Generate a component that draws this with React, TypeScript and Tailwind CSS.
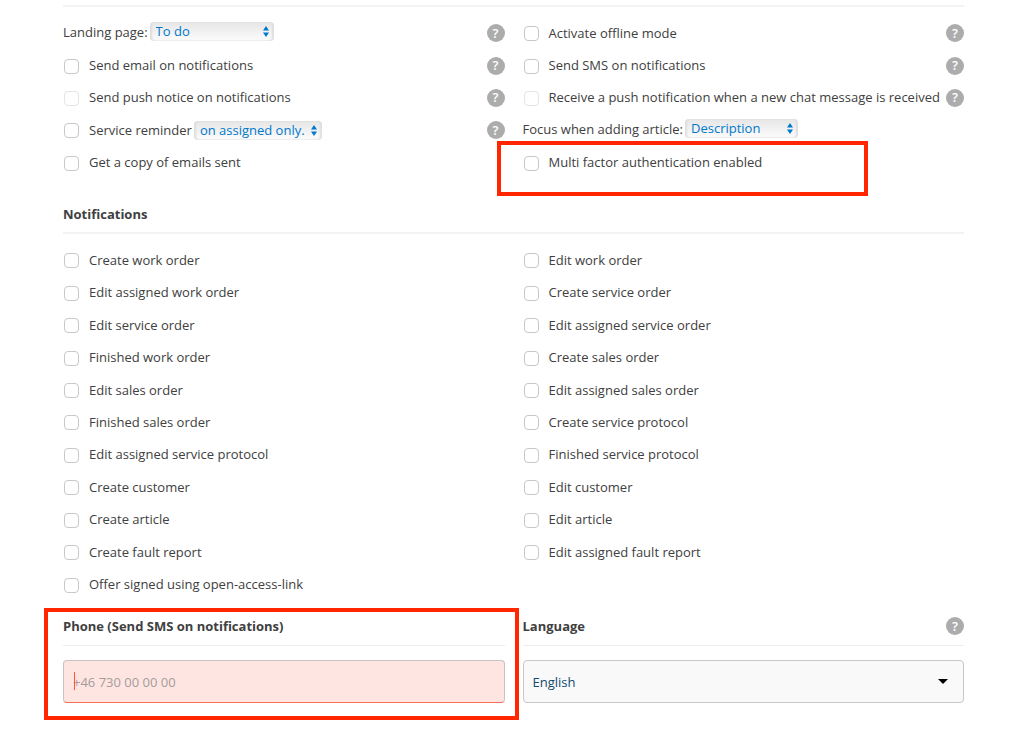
import { useState } from "react";
import type { ReactNode } from "react";

const leftNotifications = [
  "Create work order",
  "Edit assigned work order",
  "Edit service order",
  "Finished work order",
  "Edit sales order",
  "Finished sales order",
  "Edit assigned service protocol",
  "Create customer",
  "Create article",
  "Create fault report",
  "Offer signed using open-access-link",
];

const rightNotifications = [
  "Edit work order",
  "Create service order",
  "Edit assigned service order",
  "Create sales order",
  "Edit assigned sales order",
  "Create service protocol",
  "Finished service protocol",
  "Edit customer",
  "Edit article",
  "Edit assigned fault report",
];

const HelpButton = () => (
  <button
    type="button"
    aria-label="Help"
    className="flex size-[18px] shrink-0 items-center justify-center rounded-full bg-[#acacac] text-[13px] leading-none font-semibold text-white"
  >
    ?
  </button>
);

const CheckOption = ({ label, disabled = false }: { label: string; disabled?: boolean }) => (
  <label className="flex items-center gap-[10px] pl-px">
    <input
      type="checkbox"
      disabled={disabled}
      className="mt-px size-[15px] shrink-0 appearance-none rounded-[4px] border border-[#c8c8c8] bg-white checked:bg-[#0078cc] disabled:border-[#e4e4e4]"
    />
    <span className="pb-px">{label}</span>
  </label>
);

type InlineSelectProps = {
  label: string;
  options: string[];
  widthClass: string;
};

const InlineSelect = ({ label, options, widthClass }: InlineSelectProps) => (
  <span className={`relative h-[19px] ${widthClass}`}>
    <select
      aria-label={label}
      className="block h-full w-full appearance-none rounded-[4px] bg-linear-to-b from-[#e6e6e6] to-[#fcfcfc] pl-[6px] text-[13px] leading-[19px] font-medium text-[#0078cc] shadow-[inset_2px_0_2px_#dedede,inset_-2px_0_2px_#dedede]"
    >
      {options.map((option) => (
        <option key={option}>{option}</option>
      ))}
    </select>
    <svg viewBox="0 0 6 11" className="pointer-events-none absolute top-1 right-[5px] h-[11px] w-[6px] fill-[#0078cc]">
      <path d="M3 0 6 4.6H0zM3 11 0 6.4h6z" />
    </svg>
  </span>
);

const Row = ({ children, help = false }: { children: ReactNode; help?: boolean }) => (
  <div className="flex items-center justify-between">
    {children}
    {help && <HelpButton />}
  </div>
);

const Highlight = ({ className }: { className: string }) => (
  <div className={`pointer-events-none absolute border-4 border-[#ff2600] ${className}`} />
);

export default function App() {
  const [phone, setPhone] = useState("");

  return (
    <main className="min-h-screen bg-white pt-[5px] pr-[60px] pl-[63px] font-['Open_Sans',sans-serif] text-[13px] leading-5 text-[#404040]">
      <section className="grid grid-cols-2 gap-x-[18px] border-t-2 border-[#f3f3f3] pt-[10px]">
        <div className="grid min-h-[162px] auto-rows-fr">
          <Row help>
            <div className="flex items-center gap-[2px] pb-[3px]">
              <span>Landing page:</span>
              <InlineSelect label="Landing page" options={["To do", "Calendar"]} widthClass="w-[124px]" />
            </div>
          </Row>
          <Row help>
            <CheckOption label="Send email on notifications" />
          </Row>
          <Row help>
            <CheckOption label="Send push notice on notifications" disabled />
          </Row>
          <Row help>
            <div className="flex items-center gap-[2px]">
              <CheckOption label="Service reminder" />
              <InlineSelect label="Service reminder" options={["on assigned only.", "on all."]} widthClass="w-[128px]" />
            </div>
          </Row>
          <Row>
            <CheckOption label="Get a copy of emails sent" />
          </Row>
        </div>

        <div className="grid min-h-[162px] auto-rows-fr">
          <Row help>
            <CheckOption label="Activate offline mode" />
          </Row>
          <Row help>
            <CheckOption label="Send SMS on notifications" />
          </Row>
          <Row help>
            <CheckOption label="Receive a push notification when a new chat message is received" disabled />
          </Row>
          <Row>
            <div className="flex items-center gap-[2px] pb-[3px]">
              <span>Focus when adding article:</span>
              <InlineSelect label="Focus when adding article" options={["Description", "Quantity"]} widthClass="w-[113px]" />
            </div>
          </Row>
          <div className="relative flex items-center">
            <CheckOption label="Multi factor authentication enabled" />
            <Highlight className="-top-[6px] -bottom-[17px] -left-[26px] w-[371px]" />
          </div>
        </div>
      </section>

      <section className="pt-[25px]">
        <h2 className="border-b-2 border-[#f3f3f3] pb-2 font-bold">Notifications</h2>
        <div className="mt-[10px] grid min-h-[357px] grid-flow-col grid-cols-2 grid-rows-11 gap-x-[18px]">
          {[...leftNotifications, ...rightNotifications].map((label) => (
            <Row key={label}>
              <CheckOption label={label} />
            </Row>
          ))}
        </div>
      </section>

      <section className="grid grid-cols-2 gap-x-[18px] pt-[15px] pb-[26px]">
        <div className="relative">
          <label htmlFor="phone" className="block border-b border-[#ededed] pb-[9px] font-bold">
            Phone (Send SMS on notifications)
          </label>
          <div className="relative mt-[14px]">
            <input
              id="phone"
              type="tel"
              placeholder="+46 730 00 00 00"
              value={phone}
              onChange={(event) => setPhone(event.target.value)}
              className="block h-[43px] w-full rounded-[4px] border border-[#c8c4c3] border-b-[#f0705c] bg-[#ffe5e1] px-[9px] placeholder:text-[#a39c9b]"
            />
            {phone === "" && <span className="pointer-events-none absolute top-3 left-[11px] h-[18px] w-px bg-[#ff5533]" />}
          </div>
          <Highlight className="-top-2 -right-[14px] -bottom-[17px] -left-[19px]" />
        </div>

        <div>
          <div className="flex items-center justify-between border-b border-[#ededed] pb-[9px] font-bold">
            <label htmlFor="language">Language</label>
            <HelpButton />
          </div>
          <div className="relative mt-[14px]">
            <select
              id="language"
              className="block h-[43px] w-full appearance-none rounded-[4px] border border-[#c8c8c8] bg-[#f9f9f9] px-[9px] text-[#124a70]"
            >
              <option>English</option>
              <option>Svenska</option>
            </select>
            <svg viewBox="0 0 10 5" className="pointer-events-none absolute top-[19px] right-4 h-[5px] w-[10px] fill-black">
              <path d="M0 0h10L5 5z" />
            </svg>
          </div>
        </div>
      </section>
    </main>
  );
}
